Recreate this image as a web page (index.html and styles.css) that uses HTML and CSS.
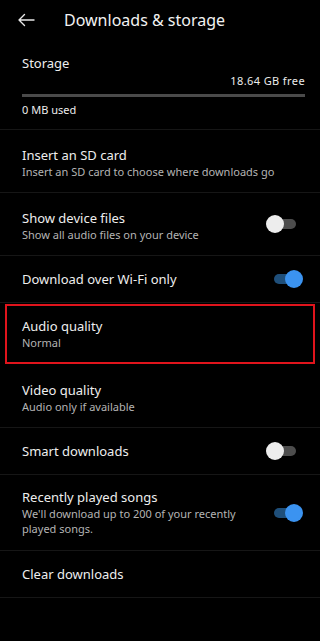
FILE: index.html
```html
<!DOCTYPE html>
<html lang="en">
<head>
    <meta charset="UTF-8">
    <meta name="viewport" content="width=device-width, initial-scale=1.0">
    <title>Downloads &amp; storage</title>
    <link rel="stylesheet" href="styles.css">
</head>
<body>
    <header class="top-bar">
        <svg class="back" width="18" height="14" viewBox="0 0 18 14">
            <path d="M17 7H2M7.5 1.5L2 7l5.5 5.5" fill="none" stroke="#e8e8e8" stroke-width="1.4" stroke-linecap="round" stroke-linejoin="round"/>
        </svg>
        <h1>Downloads &amp; storage</h1>
    </header>

    <section class="storage">
        <div class="title">Storage</div>
        <div class="free">18.64 GB free</div>
        <div class="bar"></div>
        <div class="used">0 MB used</div>
    </section>

    <div class="row two">
        <div class="text">
            <div class="title">Insert an SD card</div>
            <div class="sub">Insert an SD card to choose where downloads go</div>
        </div>
    </div>

    <div class="row two">
        <div class="text">
            <div class="title">Show device files</div>
            <div class="sub">Show all audio files on your device</div>
        </div>
        <span class="toggle"></span>
    </div>

    <div class="row one">
        <div class="text">
            <div class="title">Download over Wi-Fi only</div>
        </div>
        <span class="toggle on"></span>
    </div>

    <div class="row two marked">
        <div class="text">
            <div class="title">Audio quality</div>
            <div class="sub">Normal</div>
        </div>
    </div>

    <div class="row two">
        <div class="text">
            <div class="title">Video quality</div>
            <div class="sub">Audio only if available</div>
        </div>
    </div>

    <div class="row one">
        <div class="text">
            <div class="title">Smart downloads</div>
        </div>
        <span class="toggle"></span>
    </div>

    <div class="row three">
        <div class="text">
            <div class="title">Recently played songs</div>
            <div class="sub">We'll download up to 200 of your recently played songs.</div>
        </div>
        <span class="toggle on"></span>
    </div>

    <div class="row one">
        <div class="text">
            <div class="title">Clear downloads</div>
        </div>
    </div>
</body>
</html>
```

FILE: styles.css
```css
body {
    margin: 0;
    background: #000;
    color: #ececec;
    font-family: "Noto Sans", Arial, sans-serif;
    width: 320px;
    height: 641px;
    overflow: hidden;
}
.top-bar {
    height: 40px;
    display: flex;
    align-items: center;
    padding-left: 17px;
}
.back {
    margin-right: 29px;
}
.top-bar h1 {
    margin: 0;
    font-size: 16px;
    font-weight: normal;
    color: #f2f2f2;
}
.title {
    font-size: 13px;
    line-height: 17px;
    color: #eeeeee;
}
.sub {
    font-size: 11px;
    line-height: 15px;
    color: #b4b4b4;
}
.storage {
    height: 90px;
    box-sizing: border-box;
    padding: 15px 15px 0 22px;
    border-bottom: 1px solid #161616;
}
.storage .free {
    text-align: right;
    font-size: 11px;
    line-height: 15px;
    letter-spacing: 0.4px;
    margin-top: 1px;
}
.storage .bar {
    height: 3px;
    background: #4a4a4a;
    margin-top: 6px;
}
.storage .used {
    font-size: 11px;
    line-height: 15px;
    margin-top: 5px;
}
.row {
    display: flex;
    align-items: center;
    padding: 0 24px 0 22px;
    border-bottom: 1px solid #161616;
    box-sizing: border-box;
}
.row.one {
    height: 47px;
}
.row.two {
    height: 63px;
}
.row.two .text {
    padding-top: 3px;
}
.row.three {
    height: 76px;
}
.row .text {
    flex: 1;
}
.row.three .sub {
    padding-right: 30px;
}
.row.marked {
    height: 60px;
    margin: 1px 5px;
    border: 2px solid #e0141c;
    padding-left: 15px;
}
.row.marked .text {
    padding-top: 0;
}
.toggle {
    position: relative;
    width: 22px;
    height: 10px;
    border-radius: 5px;
    background: #4d4d4d;
}
.toggle::after {
    content: "";
    position: absolute;
    left: -8px;
    top: -4px;
    width: 18px;
    height: 18px;
    border-radius: 50%;
    background: #ededed;
}
.toggle.on {
    background: #1f4f7a;
}
.toggle.on::after {
    left: 11px;
    background: #3b93f0;
}
```
